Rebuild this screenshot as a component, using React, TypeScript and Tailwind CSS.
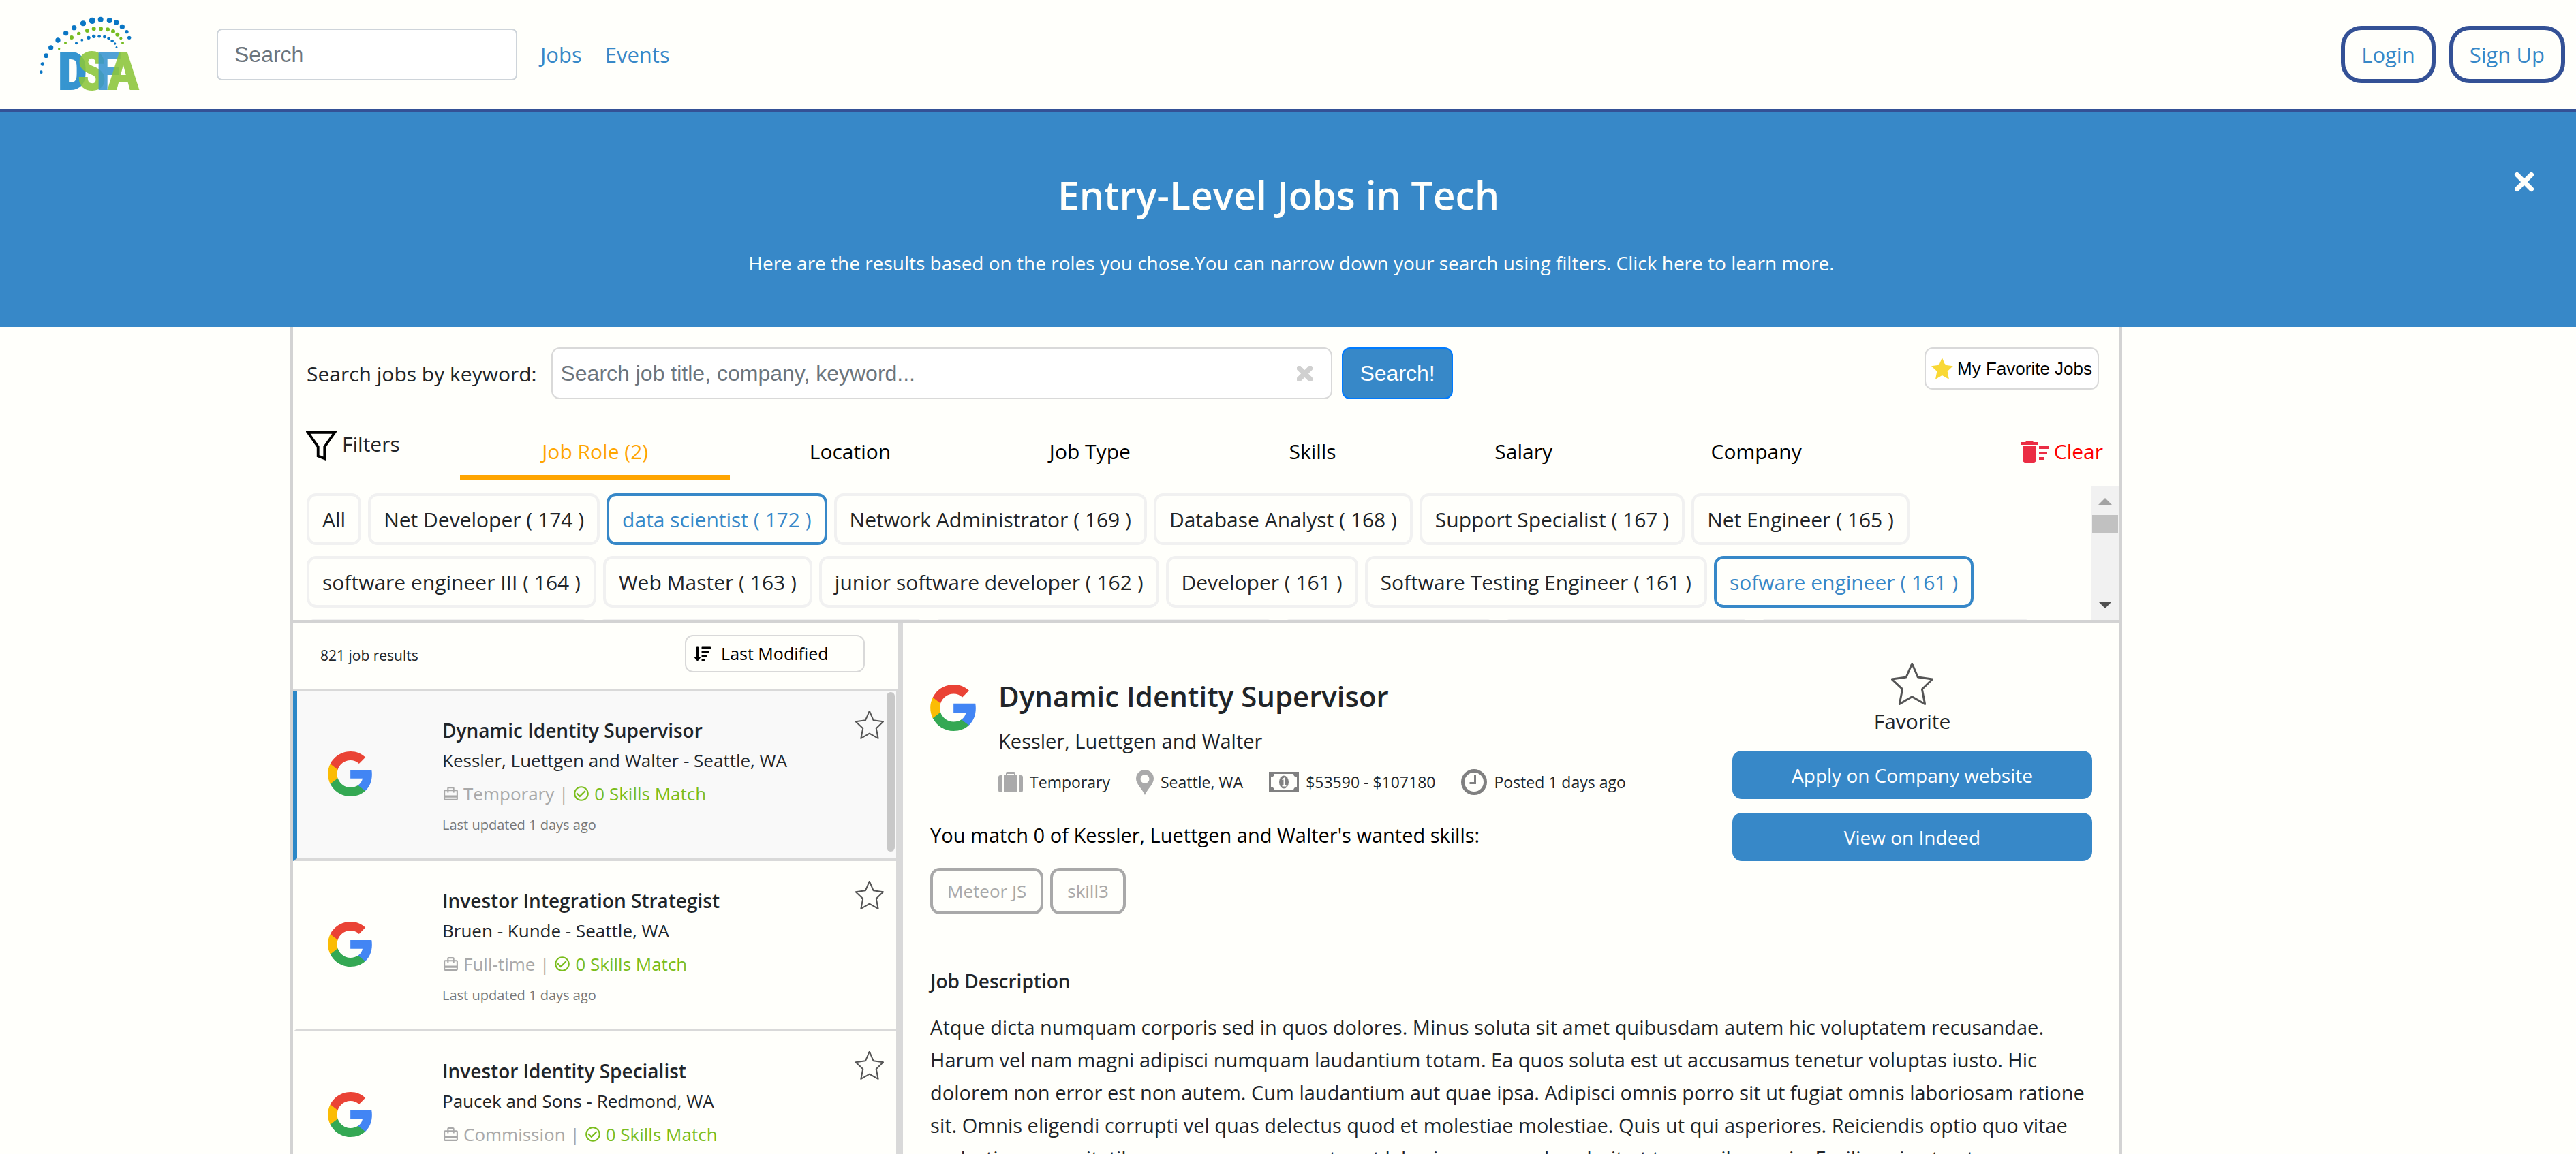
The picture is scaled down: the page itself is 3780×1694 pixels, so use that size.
import type { ReactNode } from "react";
import { FaSortAmountDown } from "react-icons/fa";
import { MdCardTravel, MdCheckCircleOutline, MdDeleteSweep } from "react-icons/md";

const STAR = "29.7,0 38.2,20 59.5,23 44.4,37.7 48.6,59.5 29.7,48.7 11.3,59.5 15.6,37.7 0,23 21.2,20";

const BLUE_DOTS: [number, number, number][] = [
  [61, 287, 7], [67, 252, 8], [83, 215, 10], [104, 180, 11], [135, 147, 11], [170, 116, 11], [206, 92, 11],
  [246, 73, 12], [286, 61, 14], [323, 56, 12], [362, 60, 12], [392, 69, 11], [418, 88, 11], [438, 110, 8],
  [449, 136, 8], [216, 160, 6], [241, 146, 6], [270, 136, 8], [293, 130, 8], [317, 130, 7], [340, 132, 7],
  [359, 139, 7], [374, 150, 7], [386, 162, 5], [393, 178, 4],
];
const GREEN_DOTS: [number, number, number][] = [
  [140, 185, 5], [168, 159, 6], [195, 135, 9], [227, 118, 8], [264, 105, 9], [293, 97, 9], [324, 97, 9],
  [354, 100, 9], [378, 108, 9], [397, 122, 9], [412, 139, 6], [420, 159, 6],
];

const LOGO_LETTERS: { ch: string; x: number; fill: string }[] = [
  { ch: "D", x: 134, fill: "#1b87cb" },
  { ch: "S", x: 222, fill: "#8cc63a" },
  { ch: "F", x: 304, fill: "#3795d0" },
  { ch: "A", x: 354, fill: "#8cc63a" },
];

function Logo() {
  return (
    <svg viewBox="0 0 540 420" className="h-[140px] w-[180px] shrink-0" role="img" aria-label="DSFA">
      {BLUE_DOTS.map(([x, y, r]) => (
        <circle key={`${x}-${y}`} cx={x} cy={y} r={r} fill="#0a76c4" />
      ))}
      {GREEN_DOTS.map(([x, y, r]) => (
        <circle key={`${x}-${y}`} cx={x} cy={y} r={r} fill="#76bc21" />
      ))}
      <g
        fontFamily="'Liberation Sans Narrow','Roboto Condensed','Open Sans Condensed','Liberation Sans',sans-serif"
        fontWeight="700"
        fontSize="230"
        strokeWidth="6"
      >
        {LOGO_LETTERS.map((l) => (
          <text key={l.ch} x={l.x} y="363" fill={l.fill} stroke={l.fill} opacity="0.88">
            {l.ch}
          </text>
        ))}
      </g>
    </svg>
  );
}

function GoogleLogo({ className }: { className: string }) {
  return (
    <svg viewBox="0 0 533.5 544.3" className={className} aria-hidden="true">
      <path fill="#4285f4" d="M533.5 278.4c0-18.5-1.5-37.1-4.7-55.3H272.1v104.8h147c-6.1 33.8-25.7 63.7-54.4 82.7v68h87.7c51.5-47.4 81.1-117.4 81.1-200.2z" />
      <path fill="#34a853" d="M272.1 544.3c73.4 0 135.3-24.1 180.4-65.7l-87.7-68c-24.4 16.6-55.9 26-92.6 26-71 0-131.2-47.9-152.8-112.3H28.9v70.1c46.2 91.9 140.3 149.9 243.2 149.9z" />
      <path fill="#fbbc04" d="M119.3 324.3c-11.4-33.8-11.4-70.4 0-104.2V150H28.9c-38.6 76.9-38.6 167.5 0 244.4l90.4-70.1z" />
      <path fill="#ea4335" d="M272.1 107.7c38.8-.6 76.3 14 104.4 40.8l77.7-77.7C405 24.6 339.7-.8 272.1 0 169.2 0 75.1 58 28.9 150l90.4 70.1c21.5-64.5 81.8-112.4 152.8-112.4z" />
    </svg>
  );
}

function StarOutline({ className }: { className: string }) {
  return (
    <svg viewBox="-1 -1 62 62" className={className} aria-hidden="true">
      <polygon points={STAR} fill="none" stroke="#555" strokeWidth="3" strokeLinejoin="round" />
    </svg>
  );
}

function Cross({ className, width }: { className: string; width: number }) {
  return (
    <svg viewBox="0 0 30 30" className={className} aria-hidden="true">
      <path d="M4.5 4.5 25.5 25.5M25.5 4.5 4.5 25.5" stroke="currentColor" strokeWidth={width} strokeLinecap="round" />
    </svg>
  );
}

function Suitcase() {
  return (
    <svg viewBox="0 0 36 30" className="h-[30px] w-[36px]" fill="#aaa" aria-hidden="true">
      <path d="M11 6V2a2 2 0 0 1 2-2h10a2 2 0 0 1 2 2v4h-2V3H13v3z" />
      <path d="M8 5h20v25H8z" />
      <path d="M6 5v25H3a3 3 0 0 1-3-3V8a3 3 0 0 1 3-3zM30 5v25h3a3 3 0 0 0 3-3V8a3 3 0 0 0-3-3z" />
    </svg>
  );
}

function Pin() {
  return (
    <svg viewBox="0 0 26 37" className="h-[37px] w-[26px]" fill="#aaa" aria-hidden="true">
      <path fillRule="evenodd" d="M13 0a13 13 0 0 1 13 13c0 8-9 15-13 24C9 28 0 21 0 13A13 13 0 0 1 13 0zm0 7a6.5 6.5 0 1 0 0 13 6.5 6.5 0 0 0 0-13z" />
    </svg>
  );
}

function Banknote() {
  return (
    <svg viewBox="0 0 44 30" className="h-[30px] w-[44px]" aria-hidden="true">
      <path fill="#808080" fillRule="evenodd" d="M0 0h44v30H0zM8 3a5 5 0 0 1-5 5v14a5 5 0 0 1 5 5h28a5 5 0 0 1 5-5V8a5 5 0 0 1-5-5z" />
      <ellipse cx="22" cy="15" rx="7" ry="9.5" fill="#808080" />
      <path d="M19.5 11.5 22.5 9.5V20M19.5 20.5h6" fill="none" stroke="#fffffb" strokeWidth="2" />
    </svg>
  );
}

function Clock() {
  return (
    <svg viewBox="0 0 38 38" className="size-[38px]" fill="none" stroke="#808080" aria-hidden="true">
      <circle cx="19" cy="19" r="16.5" strokeWidth="5" />
      <path d="M20.5 9v11.5H12.5" strokeWidth="3" />
    </svg>
  );
}

const TABS = ["Job Role (2)", "Location", "Job Type", "Skills", "Salary", "Company"];

const ROLES: { name: string; on?: boolean }[] = [
  { name: "All" },
  { name: "Net Developer ( 174 )" },
  { name: "data scientist ( 172 )", on: true },
  { name: "Network Administrator ( 169 )" },
  { name: "Database Analyst ( 168 )" },
  { name: "Support Specialist ( 167 )" },
  { name: "Net Engineer ( 165 )" },
  { name: "software engineer III ( 164 )" },
  { name: "Web Master ( 163 )" },
  { name: "junior software developer ( 162 )" },
  { name: "Developer ( 161 )" },
  { name: "Software Testing Engineer ( 161 )" },
  { name: "sofware engineer ( 161 )", on: true },
];

const JOBS = [
  { title: "Dynamic Identity Supervisor", company: "Kessler, Luettgen and Walter - Seattle, WA", type: "Temporary", on: true },
  { title: "Investor Integration Strategist", company: "Bruen - Kunde - Seattle, WA", type: "Full-time" },
  { title: "Investor Identity Specialist", company: "Paucek and Sons - Redmond, WA", type: "Commission" },
];

const DESCRIPTION = [
  "Atque dicta numquam corporis sed in quos dolores. Minus soluta sit amet quibusdam autem hic voluptatem recusandae.",
  "Harum vel nam magni adipisci numquam laudantium totam. Ea quos soluta est ut accusamus tenetur voluptas iusto. Hic",
  "dolorem non error est non autem. Cum laudantium aut quae ipsa. Adipisci omnis porro sit ut fugiat omnis laboriosam ratione",
  "sit. Omnis eligendi corrupti vel quas delectus quod et molestiae molestiae. Quis ut qui asperiores. Reiciendis optio quo vitae",
  "molestias necessitatibus cumque consequatur et laboriosam reprehenderit ut temporibus quia. Facilis quia et aut.",
];

function Meta({ icon, children }: { icon: ReactNode; children: ReactNode }) {
  return (
    <li className="flex items-center gap-[10px]">
      {icon}
      {children}
    </li>
  );
}

function JobCard({ title, company, type, on }: { title: string; company: string; type: string; on?: boolean }) {
  return (
    <li
      className={
        on
          ? "flex items-start border-r-2 border-b-4 border-l-[6px] border-r-[#d9d9d9] border-b-[#d9d9d9] border-l-[#2b87c7] bg-[#f9f9f9] pt-[37px] pr-[18px] pb-[29px]"
          : "flex items-start border-r-2 border-b-4 border-l-[6px] border-r-[#d9d9d9] border-b-[#d9d9d9] border-l-transparent pt-[37px] pr-[18px] pb-[29px]"
      }
    >
      <div className="flex w-[213px] shrink-0 self-center pb-[10px] pl-[45px]">
        <GoogleLogo className="h-[66px] w-[65px]" />
      </div>
      <div className="min-w-0 flex-1">
        <h3 className="text-[28px] leading-[42px] font-semibold">{title}</h3>
        <p className="text-[26px] leading-[46px]">{company}</p>
        <p className="flex items-center gap-[6px] text-[26px] leading-[52px] text-[#a9a9a9]">
          <MdCardTravel className="size-[25px]" />
          <span>{type} |</span>
          <span className="flex items-center gap-[6px] text-[#7abd1c]">
            <MdCheckCircleOutline className="size-[26px]" />0 Skills Match
          </span>
        </p>
        <p className="text-[20px] leading-[40px] text-[#777]">Last updated 1 days ago</p>
      </div>
      <button type="button" aria-label={`Favorite ${title}`} className="-mt-[8px]">
        <StarOutline className="size-[42px]" />
      </button>
    </li>
  );
}

export default function App() {
  return (
    <div className="flex h-screen flex-col overflow-hidden bg-[#fffffb] font-['Open_Sans',sans-serif] text-[30px] text-[#212529]">
      <header className="flex shrink-0 items-center border-b-4 border-[#345196] pr-[16px] pl-[40px]">
        <a href="#home" className="my-[10px]">
          <Logo />
        </a>
        <input
          type="search"
          aria-label="Search"
          placeholder="Search"
          className="ml-[98px] h-[76px] w-[441px] rounded-lg border-2 border-[#ced4da] bg-white px-[24px] font-['Liberation_Sans',sans-serif] text-[32px] placeholder:text-[#6c757d]"
        />
        <nav className="ml-[34px] flex gap-[34px] text-[31px] text-[#3788c8]">
          <a href="#jobs">Jobs</a>
          <a href="#events">Events</a>
        </nav>
        <div className="ml-auto flex gap-[20px] text-[31px] text-[#3788c8]">
          <button type="button" className="h-[84px] rounded-[30px] border-6 border-[#345196] px-[24px]">Login</button>
          <button type="button" className="h-[84px] rounded-[30px] border-6 border-[#345196] px-[24px]">Sign Up</button>
        </div>
      </header>

      <section className="relative shrink-0 bg-[#3788c8] pt-[86px] pb-[74px] text-center text-[#fffffb]">
        <h1 className="pr-[28px] text-[57px] leading-[72px] font-semibold">Entry-Level Jobs in Tech</h1>
        <p className="mt-[44px] pl-[10px] text-[28px] leading-[40px]">
          Here are the results based on the roles you chose.You can narrow down your search using filters. Click here to learn more.
        </p>
        <button type="button" aria-label="Close" className="absolute top-[88px] right-[61px]">
          <Cross className="size-[30px]" width={7} />
        </button>
      </section>

      <main className="mr-[666px] ml-[426px] flex min-h-0 flex-1 flex-col border-x-4 border-[#d3d3d3]">
        <form className="flex items-start pt-[30px] pr-[30px] pl-[20px]">
          <label htmlFor="keyword" className="leading-[78px]">Search jobs by keyword:</label>
          <div className="relative ml-[22px] max-w-[1146px] flex-1">
            <input
              id="keyword"
              type="text"
              placeholder="Search job title, company, keyword..."
              className="block h-[76px] w-full rounded-xl border-2 border-[#d9d9d9] bg-white pr-[70px] pl-[11px] font-['Liberation_Sans',sans-serif] text-[32px] placeholder:text-[#6c757d]"
            />
            <button type="button" aria-label="Clear keyword" className="absolute top-[27px] right-[29px] text-[#d0d0d0]">
              <Cross className="size-[23px]" width={10} />
            </button>
          </div>
          <button
            type="submit"
            className="ml-[14px] h-[76px] rounded-xl border-2 border-[#007bff] bg-[#3788c8] px-[24px] font-['Liberation_Sans',sans-serif] text-[32px] text-white"
          >
            Search!
          </button>
          <button
            type="button"
            className="ml-auto flex h-[62px] items-center gap-[6px] rounded-xl border-2 border-[#d9d9d9] bg-white px-[8px] font-['Liberation_Sans',sans-serif] text-[26px] text-black"
          >
            <svg viewBox="0 0 60 60" className="size-[32px]" aria-hidden="true">
              <polygon points={STAR} fill="#f9d835" />
            </svg>
            My Favorite Jobs
          </button>
        </form>

        <div className="flex items-start pt-[36px] pl-[19px] leading-[48px]">
          <div className="mt-[4px] flex w-[226px] shrink-0 gap-[8px]">
            <svg viewBox="-2 -2 47 47" className="mt-[4px] size-[45px]" aria-hidden="true">
              <path d="M1 1H42L26.5 23V41L16.5 37V23Z" fill="none" stroke="#000" strokeWidth="4" />
            </svg>
            Filters
          </div>
          <div role="tablist" className="flex flex-1 text-black">
            {TABS.map((t, i) => (
              <button
                key={t}
                type="button"
                role="tab"
                aria-selected={i === 0}
                className={
                  i === 0
                    ? "flex-auto border-b-6 border-[#ffa500] px-[4px] pt-[15px] pb-[11px] text-[#ffa500]"
                    : "flex-auto border-b-6 border-transparent pt-[15px] pb-[11px]"
                }
              >
                {t}
              </button>
            ))}
          </div>
          <button type="button" className="flex w-[350px] shrink-0 items-center justify-end gap-[4px] pt-[15px] pr-[24px] text-[#f00]">
            <MdDeleteSweep className="size-[48px] text-[#eb2d44]" />
            Clear
          </button>
        </div>

        <div className="mt-[10px] flex h-[200px] shrink-0 overflow-hidden border-b-4 border-[#d3d3d3]">
          <div className="flex flex-1 flex-wrap content-start gap-x-[10px] gap-y-[16px] pt-[10px] pl-[20px]">
            {ROLES.map((r) => (
              <button
                key={r.name}
                type="button"
                className={
                  r.on
                    ? "h-[76px] rounded-[14px] border-4 border-[#3788c8] px-[19px] text-[#3788c8]"
                    : "h-[76px] rounded-[14px] border-4 border-[#f1f1f1] px-[19px]"
                }
              >
                {r.name}
              </button>
            ))}
            <div className="flex w-full gap-[12px]" aria-hidden="true">
              <span className="h-[76px] w-[415px] rounded-[14px] border-4 border-[#f1f1f1]" />
              <span className="h-[76px] w-[480px] rounded-[14px] border-4 border-[#f1f1f1]" />
              <span className="h-[76px] w-[501px] rounded-[14px] border-4 border-[#f1f1f1]" />
              <span className="h-[76px] w-[311px] rounded-[14px] border-4 border-[#f1f1f1]" />
              <span className="h-[76px] w-[363px] rounded-[14px] border-4 border-[#f1f1f1]" />
              <span className="h-[76px] w-[402px] rounded-[14px] border-4 border-[#f1f1f1]" />
            </div>
          </div>
          <div className="flex w-[42px] shrink-0 flex-col items-center bg-[#f1f1f1] pt-[17px] pb-[17px]" aria-hidden="true">
            <svg viewBox="0 0 20 10" className="h-[10px] w-[20px]">
              <path d="M0 10 10 0 20 10Z" fill="#a3a3a3" />
            </svg>
            <div className="mt-[15px] h-[26px] w-[38px] bg-[#c1c1c1]" />
            <svg viewBox="0 0 20 10" className="mt-auto h-[10px] w-[20px]">
              <path d="M0 0 10 10 20 0Z" fill="#505050" />
            </svg>
          </div>
        </div>

        <div className="flex min-h-0 flex-1">
          <section className="flex w-[33.4%] shrink-0 flex-col overflow-hidden border-r-8 border-[#d9d9d9]">
            <div className="flex shrink-0 items-start justify-between border-b-2 border-[#d9d9d9] pt-[18px] pr-[48px] pb-[20px] pl-[40px]">
              <p className="text-[21px] leading-[60px]">821 job results</p>
              <button
                type="button"
                className="flex h-[55px] w-[264px] items-center gap-[15px] rounded-xl border-2 border-[#d9d9d9] px-[12px] text-[25px] text-black"
              >
                <FaSortAmountDown className="size-[24px]" />
                Last Modified
              </button>
            </div>
            <div className="relative min-h-0 flex-1">
              <ul>
                {JOBS.map((j) => (
                  <JobCard key={j.title} {...j} />
                ))}
              </ul>
              <div className="absolute top-[2px] right-[4px] h-[234px] w-[12px] rounded-full bg-[#c8c8c8]" aria-hidden="true" />
            </div>
          </section>

          <article className="min-w-0 flex-1 overflow-hidden px-[40px] text-[29px] leading-[48px]">
            <div className="flex items-start">
              <div className="flex-1 pt-[78px]">
                <div className="flex items-start gap-[33px]">
                  <GoogleLogo className="mt-[13px] h-[68px] w-[67px] shrink-0" />
                  <div>
                    <h2 className="text-[42px] leading-[60px] font-semibold">Dynamic Identity Supervisor</h2>
                    <p className="mt-[12px]">Kessler, Luettgen and Walter</p>
                    <ul className="mt-[12px] flex gap-[38px] text-[23px]">
                      <Meta icon={<Suitcase />}>Temporary</Meta>
                      <Meta icon={<Pin />}>Seattle, WA</Meta>
                      <Meta icon={<Banknote />}>$53590 - $107180</Meta>
                      <Meta icon={<Clock />}>Posted 1 days ago</Meta>
                    </ul>
                  </div>
                </div>
                <p className="mt-[30px] text-black">You match 0 of Kessler, Luettgen and Walter's wanted skills:</p>
                <ul className="mt-[24px] flex gap-[10px] text-[26px] leading-[60px] text-[#a9a9a9]">
                  <li className="rounded-[14px] border-4 border-[#a9a9a9] px-[21px]">Meteor JS</li>
                  <li className="rounded-[14px] border-4 border-[#a9a9a9] px-[21px]">skill3</li>
                </ul>
              </div>
              <div className="flex w-[528px] shrink-0 flex-col pt-[59px] text-[28px]">
                <button type="button" className="flex flex-col items-center text-[30px]">
                  <StarOutline className="size-[62px]" />
                  Favorite
                </button>
                <button type="button" className="mt-[19px] h-[71px] rounded-[14px] bg-[#3788c8] text-white">Apply on Company website</button>
                <button type="button" className="mt-[20px] h-[71px] rounded-[14px] bg-[#3788c8] text-white">View on Indeed</button>
              </div>
            </div>
            <h3 className="mt-[74px] text-[28px] font-semibold">Job Description</h3>
            <p className="mt-[20px] whitespace-nowrap">
              {DESCRIPTION.map((line) => (
                <span key={line} className="block">{line}</span>
              ))}
            </p>
          </article>
        </div>
      </main>
    </div>
  );
}
